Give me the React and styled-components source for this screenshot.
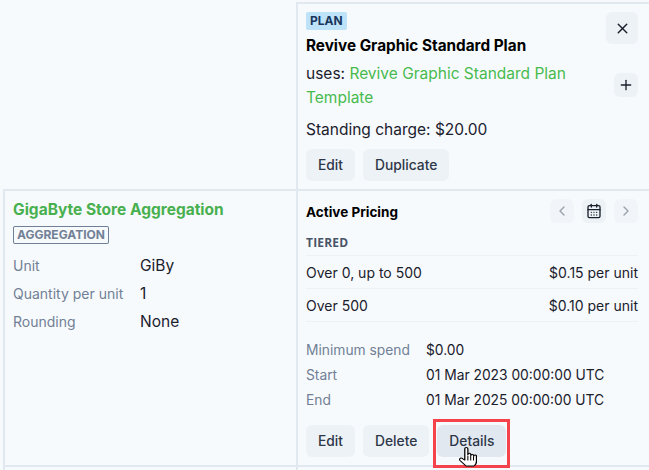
import React from "react";
import styled, { createGlobalStyle } from "styled-components";
import { LuX, LuPlus, LuChevronLeft, LuChevronRight, LuCalendarDays } from "react-icons/lu";

const GlobalStyle = createGlobalStyle`
  html, body {
    margin: 0;
    padding: 0;
    background: #f7fafc;
    overflow: hidden;
  }
  body {
    font-family: "Inter", "Liberation Sans", sans-serif;
    color: #1a202c;
  }
`;

const App = () => {
  return (
    <>
      <GlobalStyle />
      <Table>
        <Cell $empty />
        <Cell $plan>
          <PlanHead>
            <div>
              <PlanBadge>PLAN</PlanBadge>
              <PlanTitle>Revive Graphic Standard Plan</PlanTitle>
            </div>
            <IconButton $size={32}>
              <LuX size={17} />
            </IconButton>
          </PlanHead>
          <UsesRow>
            <UsesText>
              uses: <GreenLink>Revive Graphic Standard Plan Template</GreenLink>
            </UsesText>
            <IconButton $size={24}>
              <LuPlus size={16} />
            </IconButton>
          </UsesRow>
          <Charge>Standing charge: $20.00</Charge>
          <Buttons>
            <Button>Edit</Button>
            <Button>Duplicate</Button>
          </Buttons>
        </Cell>
        <Cell>
          <MeterTitle>GigaByte Store Aggregation</MeterTitle>
          <OutlineBadge>AGGREGATION</OutlineBadge>
          <MeterGrid>
            <MeterLabel>Unit</MeterLabel>
            <MeterValue>GiBy</MeterValue>
            <MeterLabel>Quantity per unit</MeterLabel>
            <MeterValue>1</MeterValue>
            <MeterLabel>Rounding</MeterLabel>
            <MeterValue>None</MeterValue>
          </MeterGrid>
        </Cell>
        <Cell $plan>
          <PricingHead>
            <PricingTitle>Active Pricing</PricingTitle>
            <Pager>
              <IconButton $size={24} $disabled>
                <LuChevronLeft size={16} />
              </IconButton>
              <IconButton $size={24}>
                <LuCalendarDays size={16} />
              </IconButton>
              <IconButton $size={24} $disabled>
                <LuChevronRight size={16} />
              </IconButton>
            </Pager>
          </PricingHead>
          <TierLabel>TIERED</TierLabel>
          <TierRow>
            <span>Over 0, up to 500</span>
            <span>$0.15 per unit</span>
          </TierRow>
          <TierRow>
            <span>Over 500</span>
            <span>$0.10 per unit</span>
          </TierRow>
          <DetailGrid>
            <DetailLabel>Minimum spend</DetailLabel>
            <DetailValue>$0.00</DetailValue>
            <DetailLabel>Start</DetailLabel>
            <DetailValue>01 Mar 2023 00:00:00 UTC</DetailValue>
            <DetailLabel>End</DetailLabel>
            <DetailValue>01 Mar 2025 00:00:00 UTC</DetailValue>
          </DetailGrid>
          <PricingButtons>
            <Button>Edit</Button>
            <Button>Delete</Button>
            <Highlight>
              <Button $hover>Details</Button>
              <HandCursor viewBox="0 0 14 20" preserveAspectRatio="none" aria-hidden="true">
                <path
                  d="M4.5 11V1.8a1.2 1.2 0 0 1 2.4 0V8l.1-.6a1.1 1.1 0 0 1 2.2 0v1.1a1.1 1.1 0 0 1 2.2 0v.7a1.1 1.1 0 0 1 2.2 0v5.3c0 2-1 3.5-2 4.5H5.5L.8 13.5c-.7-1-.4-1.8.2-2.2.7-.4 1.5-.1 2.1.5L4.5 13z"
                  fill="#fff"
                  stroke="#000"
                  strokeWidth="1"
                  strokeLinejoin="round"
                />
                <path d="M6.9 9v4.5M9.1 9v4.5M11.3 9.5v4" stroke="#000" strokeWidth=".8" fill="none" />
              </HandCursor>
            </Highlight>
          </PricingButtons>
        </Cell>
        <Cell />
        <Cell />
      </Table>
    </>
  );
};

const Table = styled.div`
  display: grid;
  grid-template-columns: 291px 352px;
  grid-template-rows: 185px 274px 10px;
  gap: 2px;
  margin: 2px 0 0 3px;
  padding: 2px 0 0 2px;
  background: #e2e8f0;
  overflow: hidden;
`;

const Cell = styled.div`
  background: #f7fafc;
  box-sizing: border-box;
  padding: ${(props) => (props.$plan ? "8px 12px 0 8px" : "8px")};
  ${(props) => props.$empty && "margin: -2px 0 0 -2px;"}
`;

const PlanHead = styled.div`
  display: flex;
  justify-content: space-between;
  align-items: flex-start;
`;

const PlanBadge = styled.div`
  width: fit-content;
  padding: 0 4px;
  height: 18px;
  line-height: 18px;
  border-radius: 2px;
  background: #bee3f8;
  color: #1a365d;
  font-size: 12px;
  font-weight: 700;
`;

const PlanTitle = styled.div`
  margin-top: 6px;
  font-size: 15.3px;
  line-height: 20px;
  font-weight: 700;
  color: #000;
`;

const UsesRow = styled.div`
  display: flex;
  justify-content: space-between;
  align-items: center;
  margin-top: 5px;
`;

const UsesText = styled.div`
  width: 280px;
  padding-top: 1px;
  margin-bottom: -1px;
  font-size: 15.5px;
  line-height: 24px;
`;

const GreenLink = styled.span`
  color: #48bb4f;
`;

const Charge = styled.div`
  margin-top: 9px;
  font-size: 15.5px;
  line-height: 24px;
`;

const Buttons = styled.div`
  display: flex;
  gap: 8px;
  margin-top: 7px;
`;

const PricingButtons = styled(Buttons)`
  margin-top: 13px;
`;

const Button = styled.button`
  height: 32px;
  padding: 0 12px;
  border: 0;
  border-radius: 6px;
  background: ${(props) => (props.$hover ? "#e2e8f0" : "#edf2f7")};
  color: #2d3748;
  font: 500 13.8px "Inter", "Liberation Sans", sans-serif;
`;

const IconButton = styled.div`
  display: flex;
  align-items: center;
  justify-content: center;
  flex: none;
  width: ${(props) => props.$size}px;
  height: ${(props) => props.$size}px;
  border-radius: 6px;
  background: ${(props) => (props.$disabled ? "#f1f4f8" : "#edf2f7")};
  color: ${(props) => (props.$disabled ? "#9aa1ac" : "#1a202c")};
`;

const MeterTitle = styled.div`
  padding-top: 1px;
  color: #48b04f;
  font-size: 15.5px;
  font-weight: 700;
  line-height: 20px;
`;

const OutlineBadge = styled.div`
  width: fit-content;
  margin-top: 6px;
  padding: 0 4px;
  border-radius: 2px;
  box-shadow: inset 0 0 0 1px #718096;
  color: #718096;
  font-size: 12px;
  font-weight: 700;
  line-height: 18px;
`;

const MeterGrid = styled.div`
  display: grid;
  grid-template-columns: 127px 1fr;
  grid-auto-rows: 28px;
  align-items: center;
  margin-top: 7px;
`;

const MeterLabel = styled.div`
  color: #718096;
  font-size: 14px;
`;

const MeterValue = styled.div`
  font-size: 15.5px;
  color: #1a202c;
`;

const PricingHead = styled.div`
  display: flex;
  justify-content: space-between;
  align-items: center;
`;

const PricingTitle = styled.div`
  margin-top: 2px;
  font-size: 13.5px;
  font-weight: 700;
  color: #000;
`;

const Pager = styled.div`
  display: flex;
  gap: 8px;
`;

const TierLabel = styled.div`
  margin-top: 12px;
  padding-bottom: 4px;
  border-bottom: 1px solid #edf2f7;
  color: #4a5568;
  font-family: "Open Sans", sans-serif;
  font-size: 12px;
  font-weight: 700;
  letter-spacing: 0.2px;
  line-height: 16px;
`;

const TierRow = styled.div`
  display: flex;
  justify-content: space-between;
  align-items: center;
  height: 32px;
  border-bottom: 1px solid #edf2f7;
  font-size: 14px;
`;

const DetailGrid = styled.div`
  display: grid;
  grid-template-columns: 120px 1fr;
  grid-auto-rows: 25px;
  align-items: center;
  margin-top: 15px;
`;

const DetailLabel = styled.div`
  color: #718096;
  font-size: 13.8px;
`;

const DetailValue = styled.div`
  font-size: 13.8px;
  color: #1a202c;
`;

const Highlight = styled.div`
  position: relative;
  display: flex;

  &::after {
    content: "";
    position: absolute;
    inset: -6px -4px -11px -4px;
    border: 3px solid #f4434a;
  }
`;

const HandCursor = styled.svg`
  position: absolute;
  z-index: 1;
  left: 22px;
  top: 22px;
  width: 18px;
  height: 20px;
`;

export default App;
